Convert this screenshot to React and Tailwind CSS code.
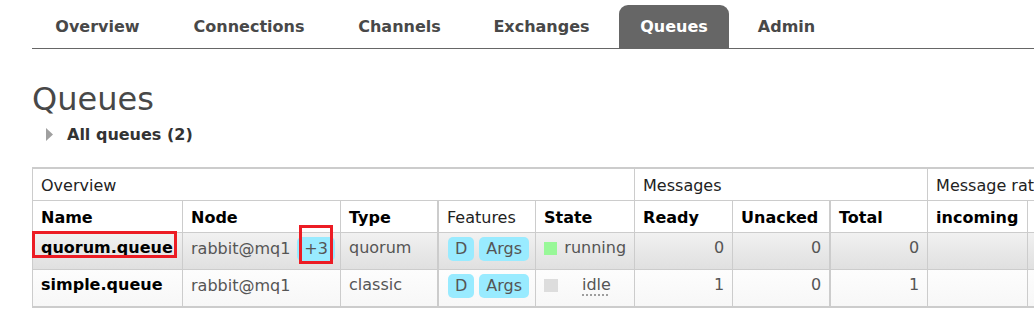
import React from 'react';

// navigation tabs, widths picked so the labels sit where the reference has them
const tabs = [
  { label: 'Overview', w: 'w-[131px]' },
  { label: 'Connections', w: 'w-[172px]' },
  { label: 'Channels', w: 'w-[129px]' },
  { label: 'Exchanges', w: 'w-[155px]' },
  { label: 'Queues', w: 'w-[110px]', active: true },
  { label: 'Admin', w: 'w-[115px]' },
];

const queues = [
  { name: 'quorum.queue', node: 'rabbit@mq1', extra: '+3', type: 'quorum', state: 'running', ready: 0, unacked: 0, total: 0, marked: true },
  { name: 'simple.queue', node: 'rabbit@mq1', type: 'classic', state: 'idle', ready: 1, unacked: 0, total: 1 },
];

const Badge = ({ children }) => (
  <span className="inline-block h-[24px] leading-[24px] px-[7px] rounded-[5px] bg-[#99ebff] text-[#555]">
    {children}
  </span>
);

export default function App() {
  return (
    <div className="w-[1034px] h-[321px] overflow-hidden bg-white font-['DejaVu_Sans',Verdana,sans-serif] text-[#484848]">
      {/* top menu */}
      <nav className="ml-[32px] pt-[5px] flex border-b border-[#666]">
        {tabs.map((t) => (
          <div
            key={t.label}
            className={`${t.w} h-[43px] flex items-center justify-center text-[16px] font-bold ${
              t.active ? 'bg-[#666] text-white rounded-t-[9px]' : 'text-[#484848]'
            }`}
          >
            {t.label}
          </div>
        ))}
      </nav>

      <div className="pl-[32px]">
        <h1 className="mt-[31px] text-[32px] leading-[38px] font-normal text-[#484848]">Queues</h1>

        <div className="mt-[7px] ml-[14px] flex items-center gap-[13px] h-[20px]">
          <svg width="8" height="14" viewBox="0 0 8 14">
            <polygon points="0,0 7,6.5 0,13" fill="#a0a0a0" />
          </svg>
          <span className="text-[16px] leading-[20px] font-bold text-[#333]">All queues (2)</span>
        </div>

        {/* queue table */}
        <table className="mt-[22px] table-fixed border-separate border-spacing-0 w-[1196px] border-l border-t-2 border-b-2 border-[#ccc] text-[16px] leading-[22px]">
          <colgroup>
            <col className="w-[150px]" />
            <col className="w-[158px]" />
            <col className="w-[98px]" />
            <col className="w-[97px]" />
            <col className="w-[99px]" />
            <col className="w-[98px]" />
            <col className="w-[98px]" />
            <col className="w-[97px]" />
            <col className="w-[100px]" />
            <col className="w-[100px]" />
            <col className="w-[100px]" />
          </colgroup>
          <thead>
            <tr>
              <th colSpan={5} className="text-left font-normal text-[#222] px-[8px] pt-[6px] pb-[3px] border-b border-r border-[#ccc]">Overview</th>
              <th colSpan={3} className="text-left font-normal text-[#222] px-[8px] pt-[6px] pb-[3px] border-b border-r border-[#ccc]">Messages</th>
              <th colSpan={3} className="text-left font-normal text-[#222] px-[8px] pt-[6px] pb-[3px] border-b border-r border-[#ccc] whitespace-nowrap">Message rates</th>
            </tr>
            <tr>
              <th className="text-left text-black px-[8px] pt-[6px] pb-[3px] border-b border-r border-[#ccc]">Name</th>
              <th className="text-left text-black px-[8px] pt-[6px] pb-[3px] border-b border-r border-[#ccc]">Node</th>
              <th className="text-left text-black px-[8px] pt-[6px] pb-[3px] border-b border-r-2 border-[#ccc]">Type</th>
              <th className="text-left font-normal text-[#222] px-[8px] pt-[6px] pb-[3px] border-b border-r border-[#ccc]">Features</th>
              <th className="text-left text-black px-[8px] pt-[6px] pb-[3px] border-b border-r border-[#ccc]">State</th>
              <th className="text-left text-black px-[8px] pt-[6px] pb-[3px] border-b border-r border-[#ccc]">Ready</th>
              <th className="text-left text-black px-[8px] pt-[6px] pb-[3px] border-b border-r-2 border-[#ccc]">Unacked</th>
              <th className="text-left text-black px-[8px] pt-[6px] pb-[3px] border-b border-r border-[#ccc]">Total</th>
              <th className="text-left text-black px-[8px] pt-[6px] pb-[3px] border-b border-r border-[#ccc]">incoming</th>
              <th className="text-left text-black px-[8px] pt-[6px] pb-[3px] border-b border-r border-[#ccc] whitespace-nowrap">deliver / get</th>
              <th className="text-left text-black px-[8px] pt-[6px] pb-[3px] border-b border-r border-[#ccc]">ack</th>
            </tr>
          </thead>
          <tbody>
            {queues.map((q, i) => {
              const last = i === queues.length - 1;
              const bg = i % 2 === 0
                ? 'bg-linear-to-b from-[#f1f1f1] to-[#e0e0e0]'
                : 'bg-linear-to-b from-[#fdfdfd] to-[#f7f7f7]';
              const base = `${bg} align-top px-[8px] pt-[4px] border-[#ccc] ${last ? '' : 'border-b'}`;
              const text = `${base} leading-[22px] pb-[10px]`;
              const boxed = `${base} leading-[24px] pb-[8px]`;
              return (
                <tr key={q.name} className="h-[36px]">
                  <td className={`${text} border-r relative font-bold text-black whitespace-nowrap`}>
                    {q.name}
                    {q.marked && (
                      <span className="absolute left-[-1px] top-[-2px] w-[145px] h-[27px] border-[3px] border-[#ec1c24]" />
                    )}
                  </td>
                  <td className={`${boxed} border-r text-[#555]`}>
                    <div className="flex items-center">
                      <span>{q.node}</span>
                      {q.extra && (
                        <span className="relative ml-[7px]">
                          <Badge>{q.extra}</Badge>
                          <span className="absolute left-[2px] top-[-12px] w-[34px] h-[39px] border-[3px] border-[#ec1c24]" />
                        </span>
                      )}
                    </div>
                  </td>
                  <td className={`${text} border-r-2 text-[#555]`}>{q.type}</td>
                  <td className={`${boxed} border-r pl-[9px]`}>
                    <div className="flex gap-[5px]">
                      <Badge>D</Badge>
                      <Badge>Args</Badge>
                    </div>
                  </td>
                  <td className={`${text} border-r text-[#555]`}>
                    <div className="flex items-center">
                      <span className={`inline-block w-[14px] h-[13px] ${q.state === 'running' ? 'bg-[#98f898]' : 'bg-[#ddd]'}`} />
                      {q.state === 'running' ? (
                        <span className="ml-[7px]">running</span>
                      ) : (
                        <span className="ml-[24px] underline decoration-dotted decoration-[#888] underline-offset-[5px]">idle</span>
                      )}
                    </div>
                  </td>
                  <td className={`${text} border-r text-right text-[#555]`}>{q.ready}</td>
                  <td className={`${text} border-r-2 text-right text-[#555]`}>{q.unacked}</td>
                  <td className={`${text} border-r text-right text-[#555]`}>{q.total}</td>
                  <td className={`${text} border-r`} />
                  <td className={`${text} border-r`} />
                  <td className={`${text} border-r`} />
                </tr>
              );
            })}
          </tbody>
        </table>
      </div>
    </div>
  );
}
